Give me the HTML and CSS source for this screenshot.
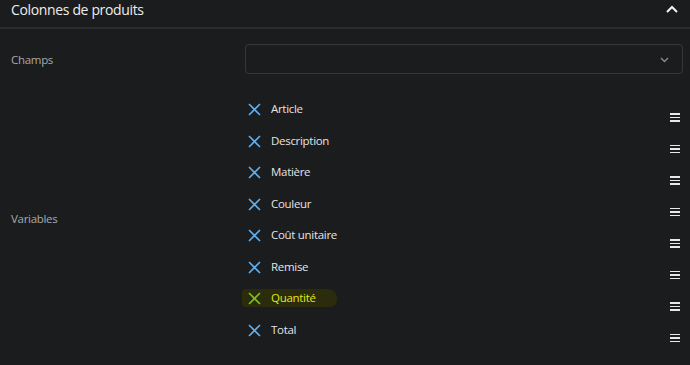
FILE: index.html
```html
<!DOCTYPE html>
<html lang="fr">
<head>
<meta charset="utf-8">
<link rel="stylesheet" href="styles.css">
</head>
<body>
<div class="panel">
  <div class="panel-head">
    <span class="panel-title">Colonnes de produits</span>
    <svg class="chev-up" width="12" height="8" viewBox="0 0 12 8"><path d="M1 7 L6 2 L11 7" fill="none" stroke="#f2f2f2" stroke-width="2"/></svg>
  </div>
  <div class="row row-champs">
    <div class="label">Champs</div>
    <div class="value">
      <div class="select">
        <svg class="chev-down" width="9" height="6" viewBox="0 0 9 6"><path d="M1 1 L4.5 4.5 L8 1" fill="none" stroke="#8a8b8f" stroke-width="1.4"/></svg>
      </div>
    </div>
  </div>
  <div class="row row-vars">
    <div class="label label-vars">Variables</div>
    <div class="value">
      <ul class="list">
        <li class="item"><span class="x"><svg width="13" height="13" viewBox="0 0 13 13"><path d="M1 1 L12 12 M12 1 L1 12" stroke="currentColor" stroke-width="1.6"/></svg></span><span class="name">Article</span><span class="grip"><i></i><i></i><i></i></span></li>
        <li class="item"><span class="x"><svg width="13" height="13" viewBox="0 0 13 13"><path d="M1 1 L12 12 M12 1 L1 12" stroke="currentColor" stroke-width="1.6"/></svg></span><span class="name">Description</span><span class="grip"><i></i><i></i><i></i></span></li>
        <li class="item"><span class="x"><svg width="13" height="13" viewBox="0 0 13 13"><path d="M1 1 L12 12 M12 1 L1 12" stroke="currentColor" stroke-width="1.6"/></svg></span><span class="name">Matière</span><span class="grip"><i></i><i></i><i></i></span></li>
        <li class="item"><span class="x"><svg width="13" height="13" viewBox="0 0 13 13"><path d="M1 1 L12 12 M12 1 L1 12" stroke="currentColor" stroke-width="1.6"/></svg></span><span class="name">Couleur</span><span class="grip"><i></i><i></i><i></i></span></li>
        <li class="item"><span class="x"><svg width="13" height="13" viewBox="0 0 13 13"><path d="M1 1 L12 12 M12 1 L1 12" stroke="currentColor" stroke-width="1.6"/></svg></span><span class="name">Coût unitaire</span><span class="grip"><i></i><i></i><i></i></span></li>
        <li class="item"><span class="x"><svg width="13" height="13" viewBox="0 0 13 13"><path d="M1 1 L12 12 M12 1 L1 12" stroke="currentColor" stroke-width="1.6"/></svg></span><span class="name">Remise</span><span class="grip"><i></i><i></i><i></i></span></li>
        <li class="item hl"><span class="mark"></span><span class="x"><svg width="13" height="13" viewBox="0 0 13 13"><path d="M1 1 L12 12 M12 1 L1 12" stroke="currentColor" stroke-width="1.6"/></svg></span><span class="name">Quantité</span><span class="grip"><i></i><i></i><i></i></span></li>
        <li class="item"><span class="x"><svg width="13" height="13" viewBox="0 0 13 13"><path d="M1 1 L12 12 M12 1 L1 12" stroke="currentColor" stroke-width="1.6"/></svg></span><span class="name">Total</span><span class="grip"><i></i><i></i><i></i></span></li>
      </ul>
    </div>
  </div>
</div>
</body>
</html>
```
FILE: styles.css
```css
html, body {
  margin: 0;
  padding: 0;
  background: #1b1c1e;
  width: 690px;
  height: 365px;
  overflow: hidden;
}
body {
  font-family: "Open Sans", "Noto Sans", sans-serif;
  color: #e6e6e6;
}
.panel {
  display: flex;
  flex-direction: column;
}
.panel-head {
  height: 27px;
  border-bottom: 2px solid #2a2b2e;
  display: flex;
  align-items: center;
  justify-content: space-between;
  padding: 0 12px 0 11px;
  box-sizing: content-box;
}
.panel-title {
  font-size: 14px;
  letter-spacing: -0.35px;
  color: #ededed;
  margin-top: -9px;
}
.chev-up {
  margin-top: -10px;
}
.row {
  display: grid;
  grid-template-columns: 234px 1fr;
  padding: 0 7px 0 11px;
}
.label {
  font-size: 11.5px;
  letter-spacing: -0.3px;
  color: #a9a9aa;
  align-self: center;
}
.label-vars {
  margin-top: -4px;
}
.row-champs {
  margin-top: 15px;
  height: 30px;
}
.select {
  height: 28px;
  border: 1px solid #36373b;
  border-radius: 4px;
  display: flex;
  align-items: center;
  justify-content: flex-end;
  padding-right: 13px;
}
.chev-down {
  margin-top: 2px;
}
.row-vars {
  margin-top: 20px;
}
.list {
  list-style: none;
  margin: 0;
  padding: 0;
}
.item {
  position: relative;
  height: 31.5px;
  display: flex;
  align-items: flex-start;
  font-size: 11.5px;
  letter-spacing: -0.3px;
  color: #e4e4e4;
}
.x {
  color: #5fb0f0;
  width: 26px;
  padding-left: 3px;
  padding-top: 9px;
  display: flex;
  box-sizing: border-box;
}
.name {
  line-height: 16px;
  padding-top: 7px;
  flex: 1;
  position: relative;
}
.grip {
  width: 10px;
  margin-right: 3px;
  padding-top: 19px;
  display: flex;
  flex-direction: column;
  gap: 2px;
}
.grip i {
  display: block;
  height: 1.6px;
  background: #e8e8e8;
}
.hl .x { color: #78c51e; position: relative; }
.hl .name { color: #e5e81a; }
.mark {
  position: absolute;
  left: -3px;
  top: 6px;
  width: 95px;
  height: 18px;
  background: #2a2c0c;
  border-radius: 4px 9px 7px 3px;
}
```
